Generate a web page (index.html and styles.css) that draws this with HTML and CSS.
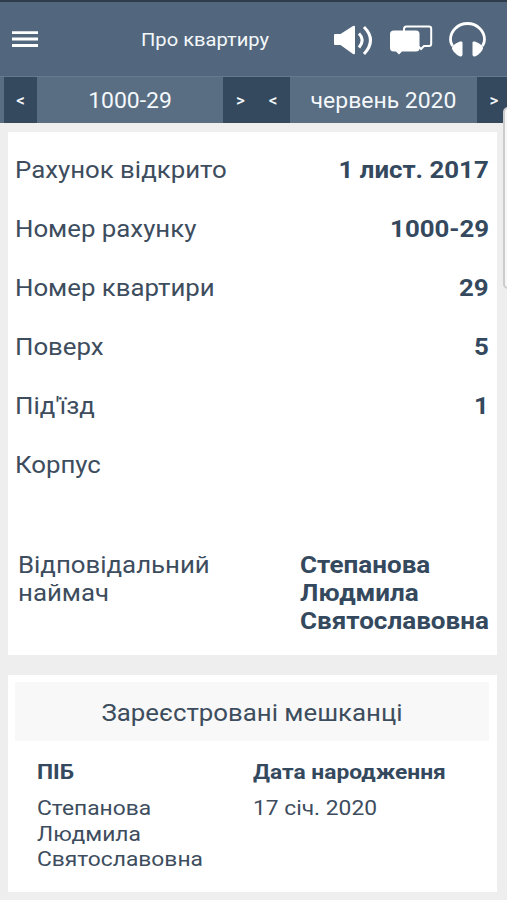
FILE: index.html
```html
<!DOCTYPE html>
<html lang="uk">
<head>
<meta charset="utf-8">
<title>Про квартиру</title>
<link rel="stylesheet" href="styles.css">
</head>
<body>
<header class="header">
  <svg class="menu" viewBox="0 0 28 18"><path d="M0 1.600h26M0 8h26M0 14.500h26"/></svg>
  <h1 class="title">Про квартиру</h1>
  <svg class="speaker" viewBox="0 0 40 32"><path class="fill" d="M2 10q-1 0-1 1v9q0 1 1 1h5.500L20 30q2 1 2-1V3q0-2-2-1L7.500 10z"/><path class="line" d="M26 9.500q6.500 6.500 0 14M31 3q13 13 0 27"/></svg>
  <svg class="chat" viewBox="0 0 44 30"><path class="thin" d="M15 6V4q0-2.500 2.500-2.500H40q2.200 0 2.200 2.200v15q0 2.300-2.200 2.300h-5l-3 3-3-3"/><path class="fill" d="M5 5.500h22q3.500 0 3.500 3.500v14q0 3.500-3.500 3.500H13l-3 3-3-3H5q-4 0-4-3.500V9q0-3.500 4-3.500z"/></svg>
  <svg class="phones" viewBox="0 0 38 36"><path class="arc" d="M3.500 24Q1.500 21 1.500 17.500a17 16 0 0 1 34 0Q35.500 21 33.500 24"/><path class="fill" d="M13.500 20.500v12q0 2.500-2.500 2-3-1-6-4.500Q1.500 26 4 23.500q3-2.500 7-4 2.500-.5 2.500 1zM23.500 20.500v12q0 2.500 2.500 2 3-1 6-4.500 3.500-4 1-6.500-3-2.500-7-4-2.500-.5-2.500 1z"/></svg>
</header>
<nav class="selectors">
  <button class="arrow">&lt;</button><span class="value account">1000-29</span><button class="arrow next">&gt;</button>
  <button class="arrow prev">&lt;</button><span class="value month">червень 2020</span><button class="arrow last">&gt;</button>
</nav>
<main class="content">
  <section class="card">
    <dl class="details">
      <div class="row"><dt>Рахунок відкрито</dt><dd>1 лист. 2017</dd></div>
      <div class="row"><dt>Номер рахунку</dt><dd>1000-29</dd></div>
      <div class="row"><dt>Номер квартири</dt><dd>29</dd></div>
      <div class="row"><dt>Поверх</dt><dd>5</dd></div>
      <div class="row"><dt>Під'їзд</dt><dd>1</dd></div>
      <div class="row"><dt>Корпус</dt><dd></dd></div>
    </dl>
    <div class="tenant">
      <div>Відповідальний<br>наймач</div>
      <strong>Степанова<br>Людмила<br>Святославовна</strong>
    </div>
  </section>
  <section class="card residents">
    <h2><span>Зареєстровані мешканці</span></h2>
    <table>
      <thead><tr><th>ПІБ</th><th>Дата народження</th></tr></thead>
      <tbody><tr><td>Степанова<br>Людмила<br>Святославовна</td><td>17 січ. 2020</td></tr></tbody>
    </table>
  </section>
</main>
<div class="scrollbar"></div>
</body>
</html>
```
FILE: styles.css
```css
* { box-sizing: border-box; }
body { margin: 0; height: 900px; overflow: hidden; background: #eee; color: #3d4d5e; font-family: Roboto, sans-serif; }
.header { height: 76px; padding-top: 2px; border-top: 2px solid #2d3b4b; background: #52677d; color: #f4f8fb; display: grid; grid-template-columns: 12px 28px 101px 192px 40px 16px 44px 16px 38px; align-items: center; }
.header svg { display: block; fill: none; stroke: #fff; overflow: visible; }
.menu { grid-column: 2; width: 28px; height: 18px; stroke-width: 2.800px; }
.title { grid-column: 4; margin: 0; font-size: 19px; font-weight: 400; white-space: nowrap; line-height: 24px; transform: scaleX(1.06); transform-origin: left; }
.speaker { grid-column: 5; width: 40px; height: 32px; }
.chat { grid-column: 7; width: 44px; height: 30px; }
.phones { grid-column: 9; width: 38px; height: 36px; }
.header .fill { fill: #fff; stroke: none; }
.line { stroke-width: 3; }
.thin { stroke-width: 2; }
.arc { stroke-width: 2.800px; }
.selectors { height: 47px; padding-left: 4px; background: #5a6e83; display: flex; color: #f4f8fb; border-top: 1px solid #677a8d; }
.arrow { width: 33px; padding: 0; border: 0; background: #34495e; color: #f4f8fb; font: 500 17px Roboto, sans-serif; }
.arrow.next { padding-left: 2px; }
.arrow.last { width: 30px; padding-left: 4px; }
.arrow.prev { width: 34px; }
.value { width: 186px; font-size: 22px; line-height: 48px; text-align: center; transform: scaleX(1.043); }
.value.month { width: 187px; }
.content { padding: 9px 10px 0 8px; }
.card { height: 523px; background: #fff; padding: 8px 8px 0 7px; }
.details { margin: 0; }
.row { height: 59.100px; display: flex; justify-content: space-between; align-items: center; font-size: 24px; }
dt, dd, .tenant > *, h2 span, th, td { transform: scaleX(1.075); transform-origin: left; }
.tenant strong, th, td { transform: scaleX(1.085); }
dd { margin: 0; color: #34495e; font-weight: 700; transform-origin: right; }
.tenant { display: flex; justify-content: space-between; margin-top: 56px; padding-left: 3px; font-size: 24px; line-height: 28px; }
.tenant strong { width: 189px; color: #34495e; white-space: nowrap; }
.residents { height: 217px; margin-top: 20px; padding-top: 7px; }
h2 { margin: 0; height: 59px; background: #f8f8f8; text-align: center; line-height: 63px; font-size: 24px; font-weight: 400; }
h2 span { display: inline-block; transform-origin: center; }
table { margin: 17px 0 0 21.500px; border-collapse: collapse; font-size: 21px; line-height: 25.500px; }
th, td { padding: 0; text-align: left; vertical-align: top; width: 216px; white-space: nowrap; }
td { padding-top: 2px; }
th { height: 36px; line-height: 28px; color: #34495e; font-weight: 700; }
.scrollbar { position: absolute; left: 503px; top: 107px; width: 10px; height: 182px; border: 2px solid #ccc; border-radius: 5px; background: #f7f7f7; }
```
